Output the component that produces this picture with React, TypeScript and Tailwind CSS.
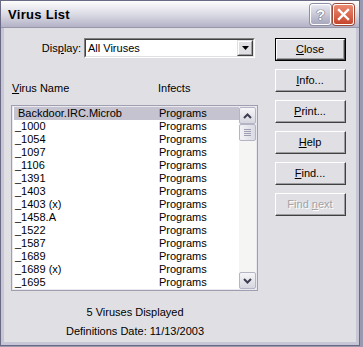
import React from 'react';

const ROWS = [
  'Backdoor.IRC.Microb',
  '_1000',
  '_1054',
  '_1097',
  '_1106',
  '_1391',
  '_1403',
  '_1403 (x)',
  '_1458.A',
  '_1522',
  '_1587',
  '_1689',
  '_1689 (x)',
  '_1695',
];

function ClassicButton({
  children,
  isDefault = false,
  disabled = false,
}: {
  children: React.ReactNode;
  isDefault?: boolean;
  disabled?: boolean;
}) {
  const face = (
    <div className="flex-1 flex border-t border-l border-t-white border-l-white border-r border-b border-r-[#404040] border-b-[#404040]">
      <div className="flex-1 flex items-center justify-center border-r border-b border-r-[#9d9da1] border-b-[#9d9da1]">
        <span
          className={
            disabled
              ? 'text-[#a3a2a8] [text-shadow:1px_1px_0_#ffffff]'
              : 'text-black'
          }
        >
          {children}
        </span>
      </div>
    </div>
  );
  return (
    <div
      className={`h-[23px] w-[71px] flex ${isDefault ? 'border border-black' : ''}`}
    >
      {face}
    </div>
  );
}

function ScrollArrow({ up }: { up: boolean }) {
  return (
    <div className="h-[17px] w-[17px] rounded-[2px] border border-[#b4b4c4] bg-gradient-to-b from-[#f6f6f9] to-[#d6d6e0] flex items-center justify-center">
      <svg width="9" height="6" viewBox="0 0 9 6">
        <path
          d={up ? 'M1 5 L4.5 1.5 L8 5' : 'M1 1 L4.5 4.5 L8 1'}
          fill="none"
          stroke="#3e3e52"
          strokeWidth="2"
        />
      </svg>
    </div>
  );
}

export default function App() {
  return (
    <div
      className="w-[363px] h-[347px] bg-[#9a99b0] p-0 text-[11px] leading-[13px]"
      style={{ fontFamily: '"Liberation Sans", Arial, sans-serif' }}
    >
      <div className="w-[360px] h-[346px] flex flex-col border border-[#6b6a84] bg-[#e0dfe3]">
        {/* title bar */}
        <div className="h-[27px] flex items-center pl-[7px] pr-[5px] bg-gradient-to-b from-[#fdfdfd] via-[#dcdce6] to-[#b3b2c6] border-b border-[#9797ab]">
          <span className="flex-1 text-[13px] font-bold text-black tracking-[0.3px]">
            Virus List
          </span>
          <div className="flex gap-[2px]">
            <div className="h-[21px] w-[21px] rounded-[3px] border border-[#ffffff] bg-gradient-to-b from-[#e8e8f1] to-[#a8a8bd] flex items-center justify-center shadow-[0_0_0_1px_#8e8ea6]">
              <span
                className="text-[15px] font-bold text-white leading-none"
                style={{ textShadow: '0 0 1px #404058, 0 0 1px #404058' }}
              >
                ?
              </span>
            </div>
            <div className="h-[21px] w-[21px] rounded-[3px] border border-[#ffffff] bg-gradient-to-b from-[#ec8a73] to-[#c6452c] flex items-center justify-center shadow-[0_0_0_1px_#9c4a3a]">
              <svg width="13" height="13" viewBox="0 0 13 13">
                <path d="M2 2 L11 11 M11 2 L2 11" stroke="#ffffff" strokeWidth="2.4" strokeLinecap="square" />
              </svg>
            </div>
          </div>
        </div>

        {/* body */}
        <div className="flex-1 flex border-x-[3px] border-b-[3px] border-[#c7c6d6]">
          <div className="flex-1 flex pt-[10px] pl-[7px]">
            {/* left column */}
            <div className="w-[248px] flex flex-col">
              <div className="flex items-center h-[20px]">
                <span className="w-[73px] text-right pr-[3px] text-black">
                  Dis<span className="underline">p</span>lay:
                </span>
                <div className="w-[171px] h-[20px] flex border border-t-[#808080] border-l-[#808080] border-r-white border-b-white">
                  <div className="flex-1 flex items-center bg-white border border-t-[#404040] border-l-[#404040] border-r-[#e0dfe3] border-b-[#e0dfe3] pl-[2px]">
                    <span className="flex-1">All Viruses</span>
                    <div className="h-[16px] w-[16px] flex border border-t-[#e0dfe3] border-l-[#e0dfe3] border-r-[#404040] border-b-[#404040] bg-[#e0dfe3]">
                      <div className="flex-1 flex items-center justify-center border border-t-white border-l-white border-r-[#9d9da1] border-b-[#9d9da1]">
                        <svg width="7" height="4" viewBox="0 0 7 4">
                          <path d="M0 0 H7 L3.5 4 Z" fill="#000" />
                        </svg>
                      </div>
                    </div>
                  </div>
                </div>
              </div>

              <div className="flex mt-[23px] h-[14px] items-center">
                <span className="w-[147px] pl-[1px]">
                  <span className="underline">V</span>irus Name
                </span>
                <span>Infects</span>
              </div>

              <div className="mt-[10px] h-[186px] w-[247px] flex border border-[#a09fb2]">
                <div className="flex-1 flex bg-white border border-[#e8e8ee] overflow-hidden">
                  <div className="flex-1 pl-[1px]">
                    {ROWS.map((r, i) => (
                      <div
                        key={r}
                        className={`h-[13px] flex ${i === 0 ? 'bg-[#c4c3cf]' : ''}`}
                      >
                        <span className={`w-[145px] ${i === 0 ? 'pl-[4px]' : 'pl-[1px]'}`}>
                          {r}
                        </span>
                        <span>Programs</span>
                      </div>
                    ))}
                  </div>
                  <div className="w-[17px] flex flex-col bg-[#f5f5f3]">
                    <ScrollArrow up />
                    <div className="h-[17px] w-[17px] rounded-[2px] border border-[#b4b4c4] bg-gradient-to-r from-[#f2f2f6] to-[#dadae4] flex flex-col items-center justify-center gap-[1px]">
                      <div className="h-[1px] w-[7px] bg-[#9e9eb0]" />
                      <div className="h-[1px] w-[7px] bg-[#9e9eb0]" />
                      <div className="h-[1px] w-[7px] bg-[#9e9eb0]" />
                      <div className="h-[1px] w-[7px] bg-[#9e9eb0]" />
                    </div>
                    <div className="flex-1" />
                    <ScrollArrow up={false} />
                  </div>
                </div>
              </div>

              <div className="mt-[15px] flex flex-col items-center gap-[6px]">
                <span>5 Viruses Displayed</span>
                <span>Definitions Date: 11/13/2003</span>
              </div>
            </div>

            {/* right column */}
            <div className="ml-[16px] flex flex-col gap-[8px]">
              <ClassicButton isDefault>
                <span className="underline">C</span>lose
              </ClassicButton>
              <ClassicButton>
                <span className="underline">I</span>nfo...
              </ClassicButton>
              <ClassicButton>
                <span className="underline">P</span>rint...
              </ClassicButton>
              <ClassicButton>
                <span className="underline">H</span>elp
              </ClassicButton>
              <ClassicButton>
                <span className="underline">F</span>ind...
              </ClassicButton>
              <ClassicButton disabled>
                Find <span className="underline">n</span>ext
              </ClassicButton>
            </div>
          </div>
        </div>
      </div>
    </div>
  );
}
